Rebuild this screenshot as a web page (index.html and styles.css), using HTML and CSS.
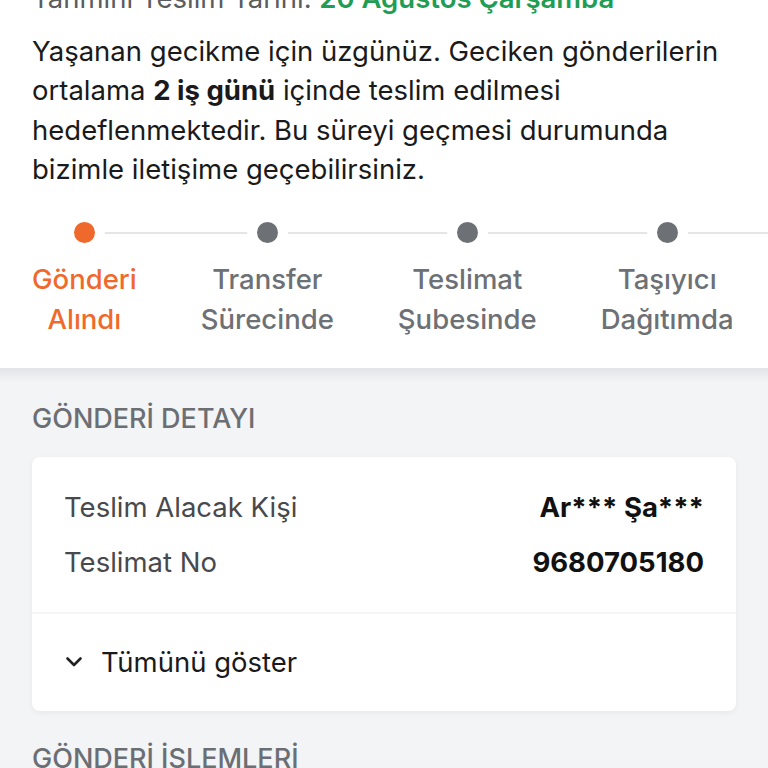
FILE: index.html
```html
<!DOCTYPE html>
<html lang="tr">
<head>
<meta charset="utf-8">
<link rel="stylesheet" href="styles.css">
</head>
<body>
<div class="page">
  <section class="summary">
    <p class="eta">Tahmini Teslim Tarihi: <span class="eta-date">20 Ağustos Çarşamba</span></p>
    <p class="notice">Yaşanan gecikme için üzgünüz. Geciken gönderilerin ortalama <b>2 iş günü</b> içinde teslim edilmesi hedeflenmektedir. Bu süreyi geçmesi durumunda bizimle iletişime geçebilirsiniz.</p>
    <div class="stepper">
      <div class="step active"><span class="dot"></span><span class="label">Gönderi<br>Alındı</span></div>
      <div class="step"><span class="dot"></span><span class="label">Transfer<br>Sürecinde</span></div>
      <div class="step"><span class="dot"></span><span class="label">Teslimat<br>Şubesinde</span></div>
      <div class="step"><span class="dot"></span><span class="label">Taşıyıcı<br>Dağıtımda</span></div>
      <div class="step"><span class="dot"></span><span class="label">Teslim<br>Edildi</span></div>
    </div>
  </section>

  <section class="group">
    <h2 class="group-title">GÖNDERİ DETAYI</h2>
    <div class="card">
      <div class="rows">
        <div class="row"><span class="row-label">Teslim Alacak Kişi</span><span class="row-value">Ar*** Şa***</span></div>
        <div class="row"><span class="row-label">Teslimat No</span><span class="row-value">9680705180</span></div>
      </div>
      <div class="expand">
        <svg class="chev" width="20" height="20" viewBox="0 0 20 20"><path d="M3.5 6.5l6.5 6.5 6.5-6.5" fill="none" stroke="#222" stroke-width="2.6" stroke-linecap="round" stroke-linejoin="round"/></svg>
        <span>Tümünü göster</span>
      </div>
    </div>
    <h2 class="group-title">GÖNDERİ İŞLEMLERİ</h2>
  </section>
</div>
</body>
</html>
```
FILE: styles.css
```css
html, body {
  margin: 0;
  padding: 0;
  background: #f3f4f6;
  font-family: Inter, "Noto Sans", "Liberation Sans", sans-serif;
  -webkit-font-smoothing: antialiased;
}
.page {
  width: 768px;
  height: 768px;
  overflow: hidden;
}
.summary {
  background: #fff;
  margin-top: -22px;
  padding: 0 0 29px 32px;
  position: relative;
  z-index: 1;
}
.eta {
  margin: 0;
  font-size: 27.5px;
  line-height: 40px;
  color: #5a5c60;
}
.eta-date {
  color: #1f9d55;
  font-weight: 600;
}
.notice {
  margin: 14px 0 0;
  font-size: 27.5px;
  line-height: 39.3px;
  color: #1a1a1a;
  padding-right: 32px;
}
.notice b { font-weight: 700; }
.stepper {
  display: flex;
  gap: 64px;
  margin-top: 33px;
  overflow: hidden;
  white-space: nowrap;
  position: relative;
}
.step {
  position: relative;
  display: flex;
  flex-direction: column;
  align-items: center;
  flex: none;
}
.step::after {
  content: "";
  position: absolute;
  top: 9.5px;
  left: 50%;
  width: 420px;
  height: 2px;
  background: #e4e5e7;
  z-index: 0;
}
.step:nth-child(4)::after { width: 600px; }
.dot {
  width: 21px;
  height: 21px;
  border-radius: 50%;
  background: #6d7075;
  box-shadow: 0 0 0 10px #fff;
  position: relative;
  z-index: 1;
}
.step.active .dot { background: #f0692c; }
.label {
  margin-top: 16px;
  font-size: 27.5px;
  line-height: 40px;
  text-align: center;
  color: #6d7075;
  font-weight: 500;
}
.step.active .label { color: #f0692c; }

.summary::after {
  content: "";
  position: absolute;
  left: 0; right: 0;
  bottom: -14px;
  height: 14px;
  background: linear-gradient(#e2e4e7, rgba(243,244,246,0));
}
.group {
  padding: 0 32px;
}
.group-title {
  margin: 0;
  padding: 33px 0 20px;
  font-size: 27px;
  line-height: 36px;
  font-weight: 500;
  color: #6b6e73;
}
.card {
  background: #fff;
  border-radius: 8px;
  box-shadow: 0 2px 6px rgba(0,0,0,0.05);
}
.rows {
  padding: 30px 32px 30px;
  border-bottom: 2px solid #f4f5f6;
  display: flex;
  flex-direction: column;
  gap: 15px;
}
.row {
  display: flex;
  justify-content: space-between;
  align-items: center;
  font-size: 27.5px;
  line-height: 40px;
}
.row-label { color: #48494c; }
.row-value { color: #111; font-weight: 700; }
.expand {
  display: flex;
  align-items: center;
  gap: 17px;
  padding: 28px 32px 29px;
  font-size: 27.5px;
  line-height: 40px;
  color: #1a1a1a;
}
.chev { flex: none; }
.card + .group-title { padding-top: 30px; }
```
